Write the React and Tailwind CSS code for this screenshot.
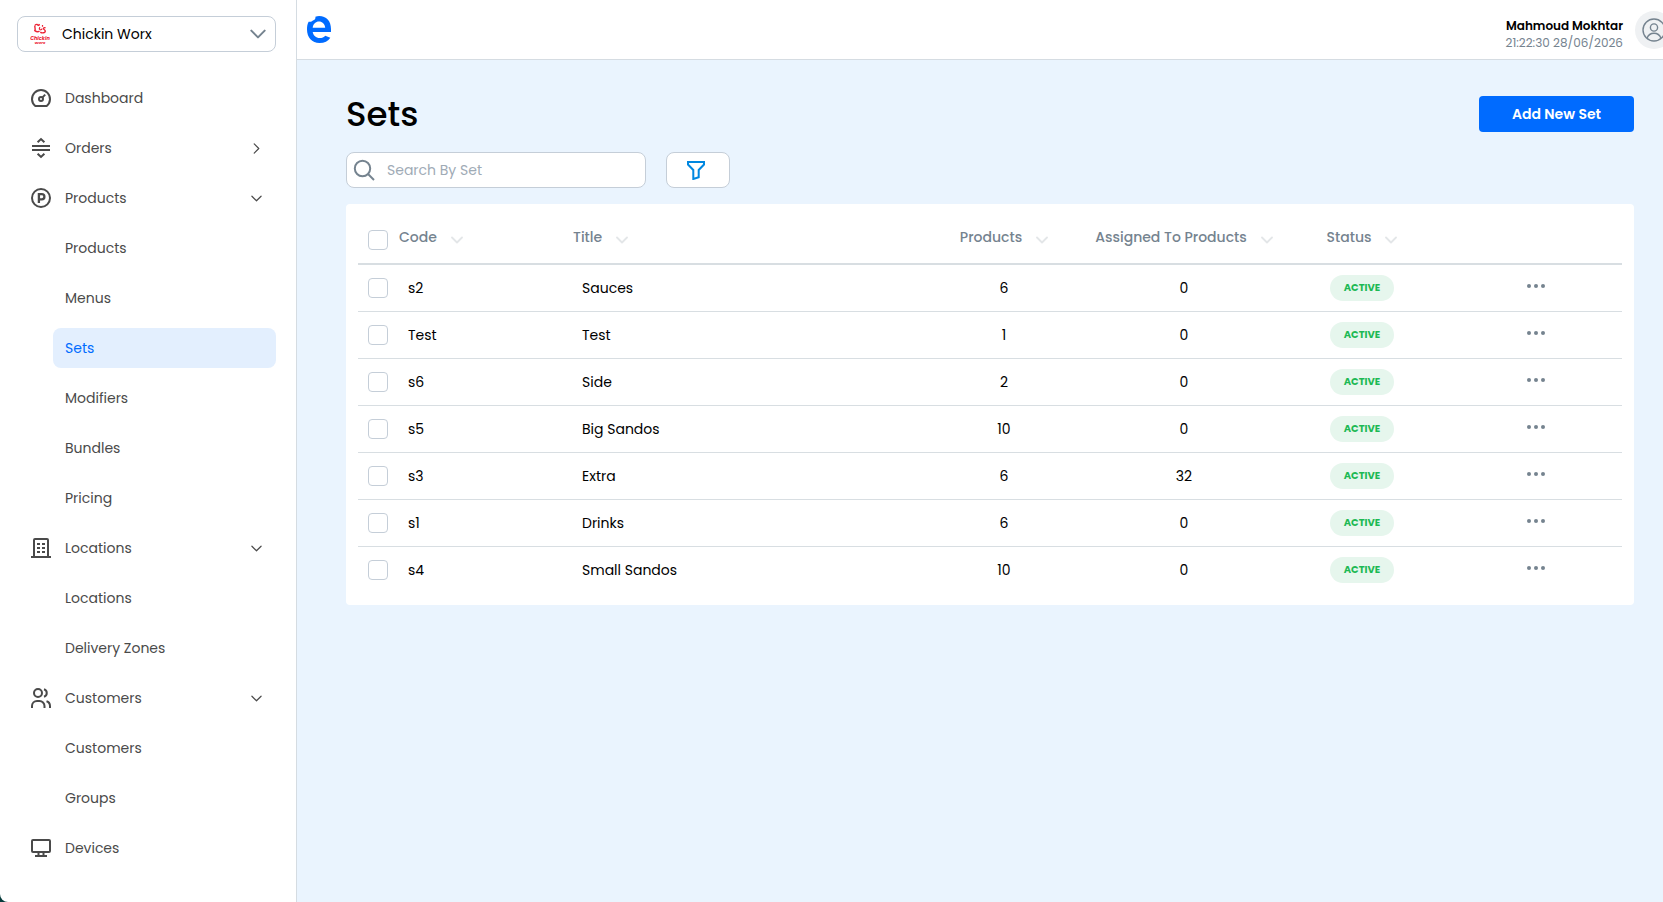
import React, { useState } from 'react'
import clsx from 'clsx'

const navigation = [
  { id: 'dashboard', label: 'Dashboard', icon: DashboardIcon },
  { id: 'orders', label: 'Orders', icon: OrdersIcon, collapsed: true },
  { id: 'products', label: 'Products', icon: ProductsIcon, children: ['Products', 'Menus', 'Sets', 'Modifiers', 'Bundles', 'Pricing'] },
  { id: 'locations', label: 'Locations', icon: LocationsIcon, children: ['Locations', 'Delivery Zones'] },
  { id: 'customers', label: 'Customers', icon: CustomersIcon, children: ['Customers', 'Groups'] },
  { id: 'devices', label: 'Devices', icon: DevicesIcon },
]

const sets = [
  { code: 's2', title: 'Sauces', products: 6, assigned: 0 },
  { code: 'Test', title: 'Test', products: 1, assigned: 0 },
  { code: 's6', title: 'Side', products: 2, assigned: 0 },
  { code: 's5', title: 'Big Sandos', products: 10, assigned: 0 },
  { code: 's3', title: 'Extra', products: 6, assigned: 32 },
  { code: 's1', title: 'Drinks', products: 6, assigned: 0 },
  { code: 's4', title: 'Small Sandos', products: 10, assigned: 0 },
]

function NavIcon({ children }) {
  return (
    <svg viewBox="0 0 24 24" className="size-6 shrink-0" fill="none" stroke="currentColor" strokeWidth="2" aria-hidden="true">
      {children}
    </svg>
  )
}

function DashboardIcon() {
  return (
    <NavIcon>
      <path d="M6.3 20A9 9 0 1 1 17.7 20Z" strokeLinejoin="round" />
      <circle cx="12" cy="13" r="2" />
      <path d="M13.2 11.6 16.2 8.6" />
    </NavIcon>
  )
}

function OrdersIcon() {
  return (
    <NavIcon>
      <path d="M3 10h18M3 14h18" />
      <path d="M8.6 6.2 12 3l3.4 3.2M8.6 17.8 12 21l3.4-3.2" />
    </NavIcon>
  )
}

function ProductsIcon() {
  return (
    <NavIcon>
      <circle cx="12" cy="12" r="9" />
      <path d="M9.900 17V8.200h2.900a2.600 2.600 0 0 1 0 5.200H9.900" strokeWidth="2.300" />
    </NavIcon>
  )
}

function LocationsIcon() {
  return (
    <NavIcon>
      <path d="M5 21V4a1 1 0 0 1 1-1h12a1 1 0 0 1 1 1v17" />
      <path d="M2 21h20" />
      <path d="M8 8h3M13 8h3M8 12h3M13 12h3M8 16h3M13 16h3" />
    </NavIcon>
  )
}

function CustomersIcon() {
  return (
    <NavIcon>
      <circle cx="9" cy="7" r="4" />
      <path d="M3 22v-2a5 5 0 0 1 5-5h2.500a5 5 0 0 1 5 5v2" />
      <path d="M15 3.200a4 4 0 0 1 0 7.600" />
      <path d="M17.500 15.200A5 5 0 0 1 21 20v2" />
    </NavIcon>
  )
}

function DevicesIcon() {
  return (
    <NavIcon>
      <rect x="3" y="4" width="18" height="12" rx="1" />
      <path d="M9.500 16v4M14.500 16v4M6 20h12" />
    </NavIcon>
  )
}

function Chevron({ className, strokeWidth = 1.5 }) {
  return (
    <svg viewBox="0 0 12 12" className={className} fill="none" stroke="currentColor" strokeWidth={strokeWidth} aria-hidden="true">
      <path d="M1 3.500 6 8.500 11 3.500" strokeLinecap="round" strokeLinejoin="round" />
    </svg>
  )
}

function StoreLogo() {
  return (
    <svg viewBox="0 0 20 22" className="h-[22px] w-5 shrink-0" fill="none" stroke="#ec2436" aria-hidden="true">
      <path d="M5 2.200c1.500-1.400 3-1 3.200.6M9.500 1.200l-1 1.600" strokeWidth="1.400" />
      <path d="M5 2.500C4.200 4.500 6 5.500 4.800 7.600 6.500 9 8 9.400 9.500 8" strokeWidth="1.400" />
      <path d="M9.800 4.200 9.300 6c.8 1.200 2.400 1 2.700-.4M12.500 2v1.800" strokeWidth="1.200" />
      <path d="M15.500 4.800c-2-.5-2.700.8-1.400 1.700s1.800 2.300.2 3c-1.300.5-2.800.5-4-.4" strokeWidth="1.400" />
      <text x="10" y="16.500" textAnchor="middle" fill="#ec2436" stroke="none" className="text-[5px] font-bold italic">Chickin</text>
      <text x="10" y="20.500" textAnchor="middle" fill="#ec2436" stroke="none" className="text-[4px] font-bold italic">Worx</text>
    </svg>
  )
}

function BrandLogo() {
  return (
    <svg viewBox="0 0 26 28" className="mb-0.5 h-7 w-[26px]" fill="#006bff" role="img" aria-label="Brand">
      <path
        fillRule="evenodd"
        d="M25 17H6.700c.7 3.600 3.200 6 7 6 2.400 0 4.200-.8 5.600-2.300l5 2C22.200 26.200 18.500 28 13.500 28 6 28 1 22.300 1 14.500 1 11.400 1.400 9 2.600 6.800c2 .2 3.400-.1 4.300-1.200C8.600 5 9.900 3.700 9.400 1.700 10.500 1.200 11.800 1 13.200 1 20.300 1 25 6 25 14ZM6.700 12.700h12.500C18.700 9 16.300 6.600 13 6.600S7.200 9 6.700 12.700Z"
      />
    </svg>
  )
}

function Sidebar({ activePage, onSelect }) {
  return (
    <aside className="w-[297px] shrink-0 rounded-bl-lg border-r border-[#d5dce2] bg-white pt-4 pr-5 pb-6 pl-[17px]">
      <button className="flex h-9 w-full items-center rounded-lg border border-[#c5ced8] pr-[9px] pl-3 text-sm">
        <StoreLogo />
        <span className="ml-3 grow text-left">Chickin Worx</span>
        <Chevron className="size-4 text-[#75838f]" />
      </button>

      <nav className="mt-[26px] flex flex-col gap-2.5 text-sm text-[#4a4a4a]">
        {navigation.map(({ id, label, icon: Icon, collapsed, children }) => (
          <React.Fragment key={id}>
            <a href={`#${id}`} className="flex h-10 items-center pr-3.5 pl-3">
              <Icon />
              <span className="ml-3 grow">{label}</span>
              {collapsed && <Chevron className="size-[11px] -rotate-90" strokeWidth={1.3} />}
              {children && <Chevron className="size-[11px]" strokeWidth={1.3} />}
            </a>
            {children?.map((child) => (
              <a
                key={child}
                href={`#${id}`}
                onClick={() => onSelect(child)}
                className={clsx(
                  'ml-9 flex h-10 items-center rounded-lg pl-3',
                  child === activePage && 'bg-[#e3effe] text-[#006bff]'
                )}
              >
                {child}
              </a>
            ))}
          </React.Fragment>
        ))}
      </nav>
    </aside>
  )
}

function Header() {
  return (
    <header className="flex h-[60px] items-center justify-between overflow-hidden border-b border-[#d5dce2] bg-white pl-[9px]">
      <BrandLogo />
      <div className="-mr-2.5 flex items-center gap-3">
        <div className="pt-2.5 text-right text-xs">
          <p className="leading-4 font-semibold">Mahmoud Mokhtar</p>
          <p className="leading-[18px] text-[#75838f]">21:22:30 28/06/2026</p>
        </div>
        <button aria-label="Account" className="flex size-[38px] items-center justify-center rounded-full bg-[#eff1f3]">
          <svg viewBox="0 0 24 24" className="size-6 text-[#75838f]" fill="none" stroke="currentColor" strokeWidth="1.400">
            <circle cx="12" cy="12" r="11" />
            <circle cx="12" cy="9.500" r="3.600" />
            <path d="M5 20.200c1.200-3.200 3.800-5 7-5s5.800 1.800 7 5" />
          </svg>
        </button>
      </div>
    </header>
  )
}

function Checkbox({ label }) {
  return (
    <input
      type="checkbox"
      aria-label={label}
      className="block size-5 appearance-none rounded border border-[#c5ced8] bg-white checked:bg-[#006bff]"
    />
  )
}

function ColumnHeader({ label, centered }) {
  return (
    <th className={clsx('p-0 font-medium', !centered && 'pl-2')}>
      <button className={clsx('flex items-center gap-3.5 whitespace-nowrap', centered && 'mx-auto')}>
        <span className="pb-1.5">{label}</span>
        <Chevron className="size-3 text-[#e3e6e8]" strokeWidth={1.8} />
      </button>
    </th>
  )
}

function SetsTable({ rows }) {
  return (
    <div className="mt-4 rounded bg-white px-3 pt-3 pb-[11px]">
      <table className="w-full table-fixed border-separate border-spacing-0 text-sm">
        <colgroup>
          <col className="w-[33px]" />
          <col className="w-[174px]" />
          <col />
          <col className="w-[180px]" />
          <col className="w-[180px]" />
          <col className="w-[176px]" />
          <col className="w-[172px]" />
        </colgroup>
        <thead className="[&_th]:border-b-2 [&_th]:border-[#d8dee2]">
          <tr className="h-[49px] text-[#75838f]">
            <th className="p-0 pl-2.5"><Checkbox label="Select all sets" /></th>
            <ColumnHeader label="Code" />
            <ColumnHeader label="Title" />
            <ColumnHeader label="Products" centered />
            <ColumnHeader label="Assigned To Products" centered />
            <ColumnHeader label="Status" centered />
            <th aria-label="Actions" />
          </tr>
        </thead>
        <tbody className="[&_td]:border-b [&_td]:border-[#d8dee2] [&_tr:last-child_td]:border-transparent">
          {rows.map((row) => (
            <tr key={row.code} className="h-[47px] text-center">
              <td className="p-0 pl-2.5"><Checkbox label={`Select ${row.title}`} /></td>
              <td className="p-0 pl-[17px] text-left">{row.code}</td>
              <td className="p-0 pl-[17px] text-left">{row.title}</td>
              <td className="p-0">{row.products}</td>
              <td className="p-0">{row.assigned}</td>
              <td className="p-0">
                <span className="inline-flex h-[26px] w-16 items-center justify-center rounded-full bg-[#e6f6ed] align-middle text-[10px] font-bold text-[#1db954]">
                  ACTIVE
                </span>
              </td>
              <td className="p-0">
                <button aria-label={`Actions for ${row.title}`} className="mx-auto flex gap-[3px] pt-1 pb-2">
                  <span className="size-1 rounded-full bg-[#75838f]" />
                  <span className="size-1 rounded-full bg-[#75838f]" />
                  <span className="size-1 rounded-full bg-[#75838f]" />
                </button>
              </td>
            </tr>
          ))}
        </tbody>
      </table>
    </div>
  )
}

export default function App() {
  const [activePage, setActivePage] = useState('Sets')
  const [search, setSearch] = useState('')

  const rows = sets.filter((set) => set.title.toLowerCase().includes(search.toLowerCase()))

  return (
    <div className="flex min-h-screen bg-[#063b3b] font-['Poppins','Inter',sans-serif] text-black">
      <Sidebar activePage={activePage} onSelect={setActivePage} />

      <div className="min-w-0 grow bg-[#eaf4fe]">
        <Header />

        <main className="pt-9 pr-[29px] pb-8 pl-[49px]">
          {/* Title and action */}
          <div className="flex h-9 items-center justify-between">
            <h1 className="text-[34px] font-medium">Sets</h1>
            <button className="h-9 w-[155px] rounded bg-[#006bff] text-sm font-semibold text-white">Add New Set</button>
          </div>

          {/* Search and filter */}
          <div className="mt-5 flex gap-5">
            <label className="flex h-9 w-[300px] items-center rounded-lg border border-[#c5ced8] bg-white pl-1.5">
              <svg viewBox="0 0 22 22" className="size-[22px] shrink-0 text-[#75838f]" fill="none" stroke="currentColor" strokeWidth="2" aria-hidden="true">
                <circle cx="9.500" cy="9.500" r="7.700" />
                <path d="m15 15 6 6" />
              </svg>
              <input
                value={search}
                onChange={(e) => setSearch(e.target.value)}
                aria-label="Search By Set"
                placeholder="Search By Set"
                className="ml-3 min-w-0 grow bg-transparent text-sm outline-none placeholder:text-[#9fabb6]"
              />
            </label>
            <button aria-label="Filter" className="flex h-9 w-16 items-center rounded-lg border border-[#c5ced8] bg-white pl-[19px]">
              <svg viewBox="0 0 20 20" className="size-5" fill="none" stroke="#0087e0" strokeWidth="2" aria-hidden="true">
                <path d="M2 2h16v2.500L12.700 10v7.300L7.300 19v-9L2 4.500Z" />
              </svg>
            </button>
          </div>

          <SetsTable rows={rows} />
        </main>
      </div>
    </div>
  )
}
